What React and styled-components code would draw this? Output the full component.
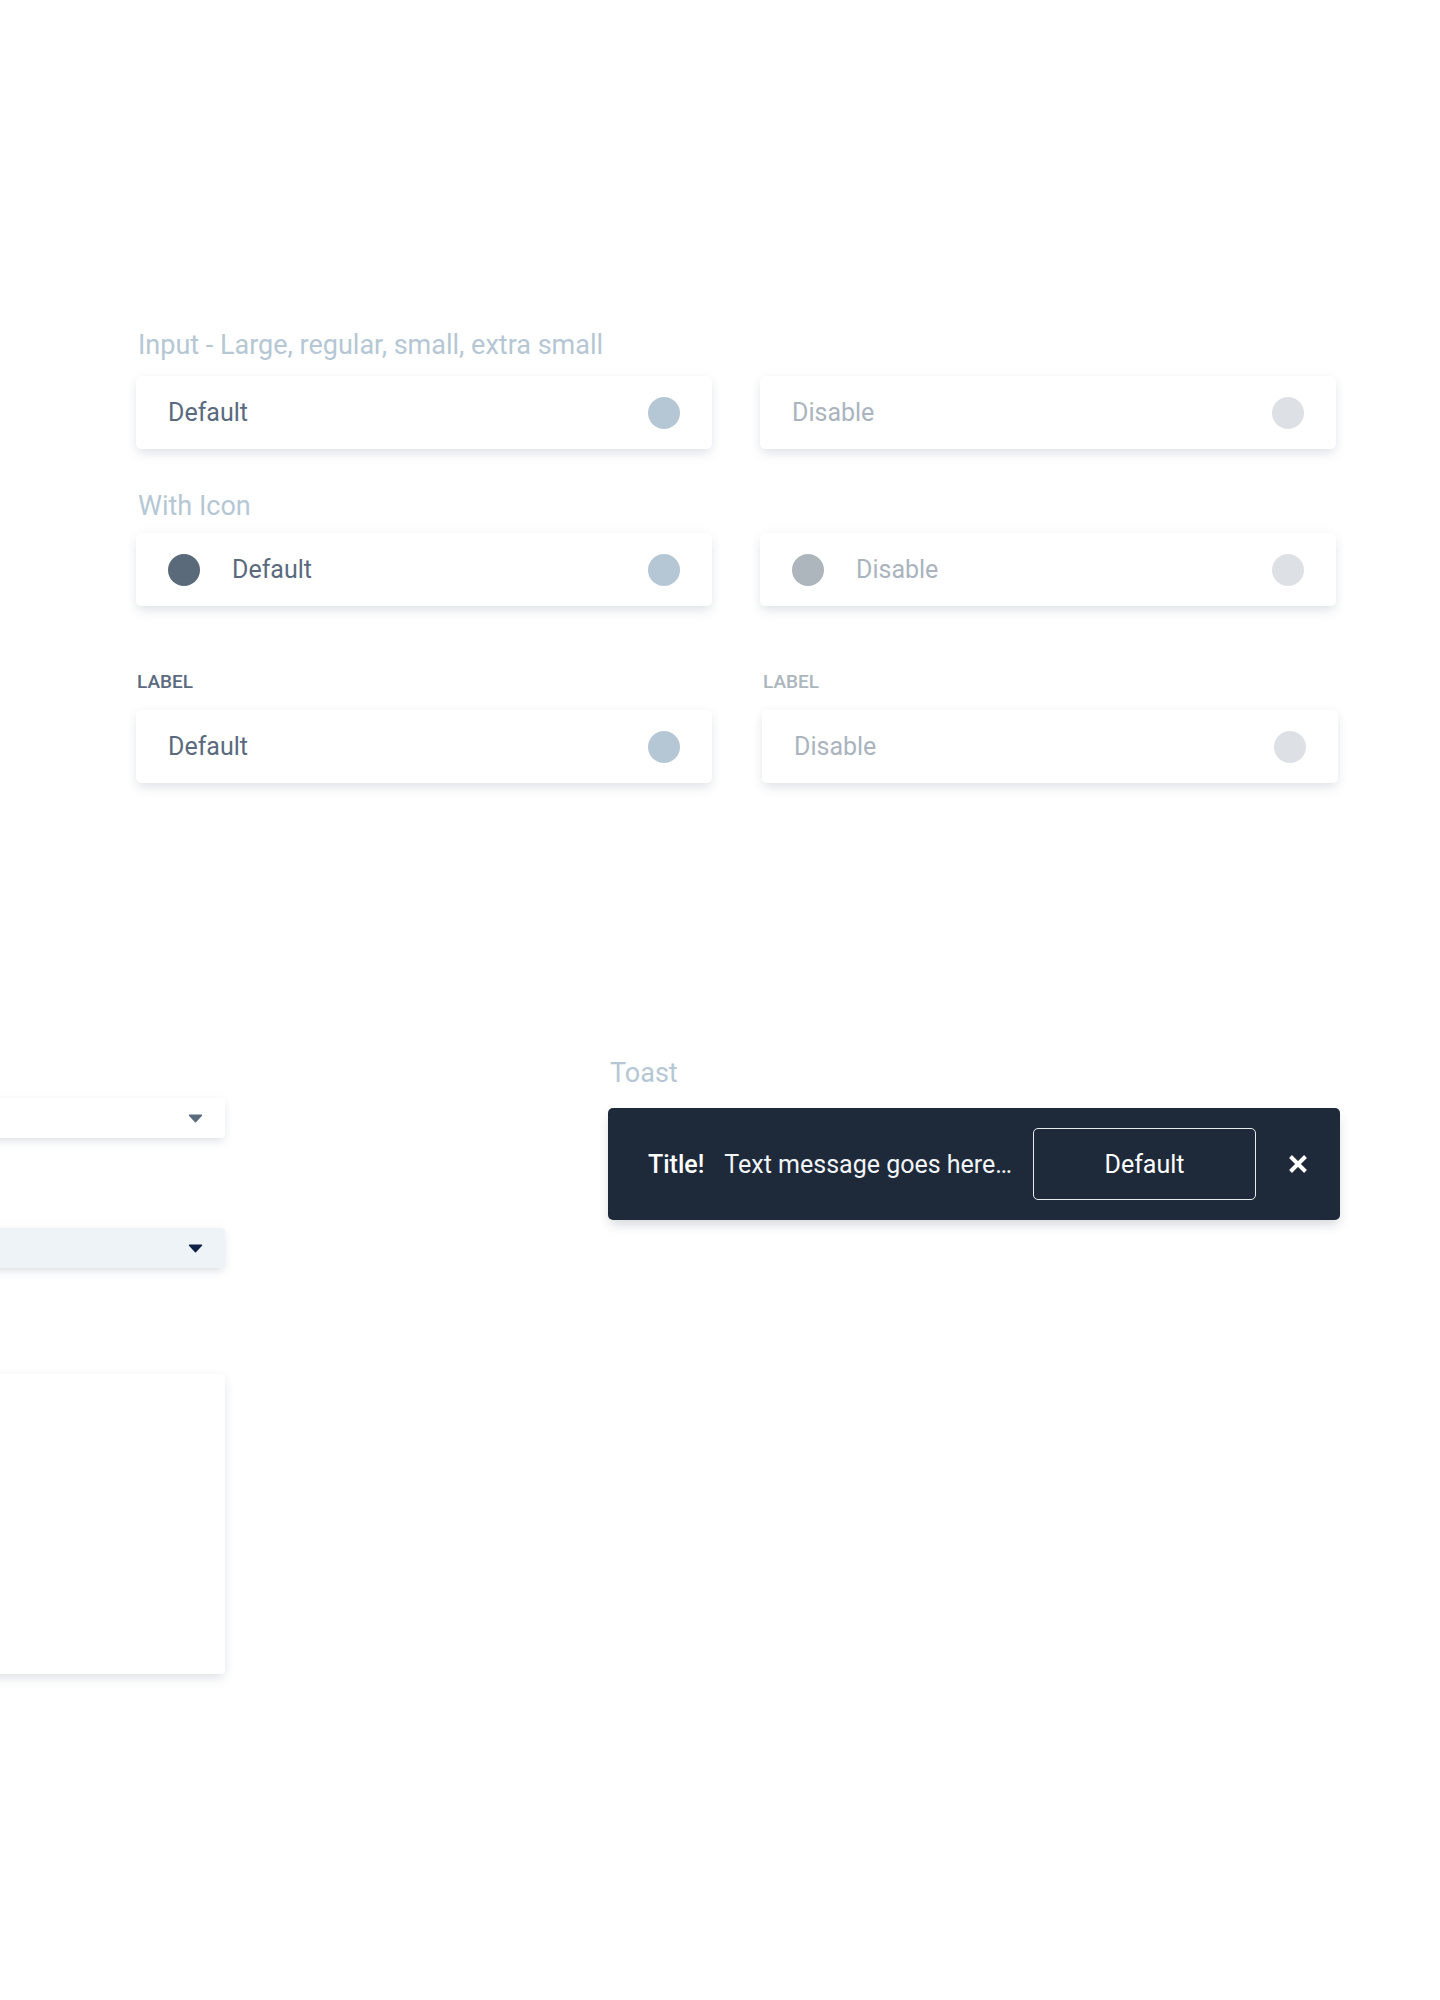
import React from "react";
import styled, { createGlobalStyle } from "styled-components";

const GlobalStyle = createGlobalStyle`
  html, body {
    margin: 0;
    padding: 0;
    background: #ffffff;
  }
  body {
    font-family: Roboto, "Liberation Sans", Arial, sans-serif;
    -webkit-font-smoothing: antialiased;
  }
`;

const fields = [
  { label: "Default", disabled: false },
  { label: "Disable", disabled: true },
];

const App = () => {
  return (
    <Page>
      <GlobalStyle />
      <InputSection>
        <Heading>Input - Large, regular, small, extra small</Heading>
        <FieldRow $top={15}>
          {fields.map((f) => (
            <Field key={f.label} $disabled={f.disabled}>
              <FieldText $disabled={f.disabled}>{f.label}</FieldText>
              <Dot $disabled={f.disabled} />
            </Field>
          ))}
        </FieldRow>

        <Heading $top={41}>With Icon</Heading>
        <FieldRow $top={11}>
          {fields.map((f) => (
            <Field key={f.label} $disabled={f.disabled}>
              <LeadIcon $disabled={f.disabled} />
              <FieldText $disabled={f.disabled}>{f.label}</FieldText>
              <Dot $disabled={f.disabled} />
            </Field>
          ))}
        </FieldRow>

        <FieldRow $top={65} $gap={50}>
          {fields.map((f) => (
            <LabeledField key={f.label}>
              <FieldLabel $disabled={f.disabled}>LABEL</FieldLabel>
              <Field $disabled={f.disabled}>
                <FieldText $disabled={f.disabled}>{f.label}</FieldText>
                <Dot $disabled={f.disabled} />
              </Field>
            </LabeledField>
          ))}
        </FieldRow>
      </InputSection>

      <BottomSection>
        <SelectColumn>
          <Select>
            <Caret color="#5b6b7e" />
          </Select>
          <Select $active>
            <Caret color="#0f2145" />
          </Select>
          <MenuPanel />
        </SelectColumn>

        <ToastColumn>
          <Heading>Toast</Heading>
          <Toast>
            <ToastTitle>Title!</ToastTitle>
            <ToastMessage>Text message goes here…</ToastMessage>
            <ToastButton>Default</ToastButton>
            <CloseButton aria-label="close">
              <svg width="22" height="20" viewBox="0 0 22 20">
                <path
                  d="M3.5 2.5 L18.5 17.5 M18.5 2.5 L3.5 17.5"
                  stroke="#ffffff"
                  strokeWidth="4"
                  strokeLinecap="butt"
                />
              </svg>
            </CloseButton>
          </Toast>
        </ToastColumn>
      </BottomSection>
    </Page>
  );
};

const Caret = ({ color }) => (
  <svg width="15" height="9" viewBox="0 0 15 9">
    <path
      d="M1.5 1.2 H13.5 L7.5 7.8 Z"
      fill={color}
      stroke={color}
      strokeWidth="1.4"
      strokeLinejoin="round"
    />
  </svg>
);

export default App;

const Page = styled.div`
  width: 1440px;
  min-height: 2000px;
  overflow: hidden;
  background: #ffffff;
`;

const InputSection = styled.section`
  display: flex;
  flex-direction: column;
  padding: 329px 0 0 136px;
`;

const Heading = styled.h2`
  margin: ${({ $top }) => $top || 0}px 0 0 2px;
  font-size: 27px;
  line-height: 32px;
  font-weight: 400;
  color: #b5c7d4;
`;

const FieldRow = styled.div`
  display: flex;
  gap: ${({ $gap }) => $gap || 48}px;
  margin-top: ${({ $top }) => $top || 0}px;
`;

const LabeledField = styled.div`
  display: flex;
  flex-direction: column;
  gap: 17px;
`;

const FieldLabel = styled.div`
  font-size: 19px;
  line-height: 22px;
  font-weight: 500;
  padding-left: 1px;
  color: ${({ $disabled }) => ($disabled ? "#adb5bd" : "#5b6b7f")};
`;

const Field = styled.div`
  display: flex;
  align-items: center;
  gap: 32px;
  width: 576px;
  height: 73px;
  box-sizing: border-box;
  padding: 0 32px;
  border-radius: 5px;
  background: #ffffff;
  box-shadow: 0 6px 12px -2px rgba(70, 90, 115, 0.16),
    0 0 10px rgba(70, 90, 115, 0.05);
`;

const FieldText = styled.span`
  flex: 1;
  font-size: 25px;
  line-height: 28px;
  color: ${({ $disabled }) => ($disabled ? "#aab4be" : "#5a6a7e")};
`;

const Dot = styled.span`
  width: 32px;
  height: 32px;
  border-radius: 50%;
  flex-shrink: 0;
  background: ${({ $disabled }) => ($disabled ? "#dde1e5" : "#b5c7d4")};
`;

const LeadIcon = styled.span`
  width: 32px;
  height: 32px;
  border-radius: 50%;
  flex-shrink: 0;
  background: ${({ $disabled }) => ($disabled ? "#adb5bd" : "#5b6a7b")};
`;

const BottomSection = styled.section`
  display: flex;
  align-items: flex-start;
  gap: 383px;
  margin-top: 274px;
`;

const SelectColumn = styled.div`
  display: flex;
  flex-direction: column;
  width: 400px;
  margin-left: -175px;
  padding-top: 41px;
  flex-shrink: 0;
`;

const Select = styled.div`
  display: flex;
  align-items: center;
  justify-content: flex-end;
  height: 40px;
  padding-right: 22px;
  margin-top: ${({ $active }) => ($active ? 90 : 0)}px;
  border-radius: 4px;
  background: ${({ $active }) => ($active ? "#eef3f7" : "#ffffff")};
  box-shadow: 0 5px 10px -2px rgba(70, 90, 115, 0.16),
    0 0 8px rgba(70, 90, 115, 0.05);
`;

const MenuPanel = styled.div`
  height: 300px;
  margin-top: 106px;
  border-radius: 4px;
  background: #ffffff;
  box-shadow: 0 6px 12px -2px rgba(70, 90, 115, 0.16),
    0 0 10px rgba(70, 90, 115, 0.05);
`;

const ToastColumn = styled.div`
  display: flex;
  flex-direction: column;
  gap: 19px;
`;

const Toast = styled.div`
  display: flex;
  align-items: center;
  width: 732px;
  height: 112px;
  box-sizing: border-box;
  padding: 0 31px 0 40px;
  border-radius: 5px;
  background: #1e2a3a;
  box-shadow: 0 6px 12px -2px rgba(30, 42, 58, 0.2);
`;

const ToastTitle = styled.span`
  font-size: 25px;
  font-weight: 500;
  color: #ffffff;
  margin-right: 20px;
  white-space: nowrap;
`;

const ToastMessage = styled.span`
  font-size: 25px;
  color: #f2f5f8;
  white-space: nowrap;
`;

const ToastButton = styled.button`
  width: 223px;
  height: 72px;
  flex-shrink: 0;
  margin-left: auto;
  border: 1.5px solid #e6ebf0;
  border-radius: 5px;
  background: transparent;
  color: #ffffff;
  font-family: inherit;
  font-size: 25px;
`;

const CloseButton = styled.button`
  display: flex;
  align-items: center;
  justify-content: center;
  flex-shrink: 0;
  margin-left: 31px;
  padding: 0;
  border: none;
  background: transparent;
`;
